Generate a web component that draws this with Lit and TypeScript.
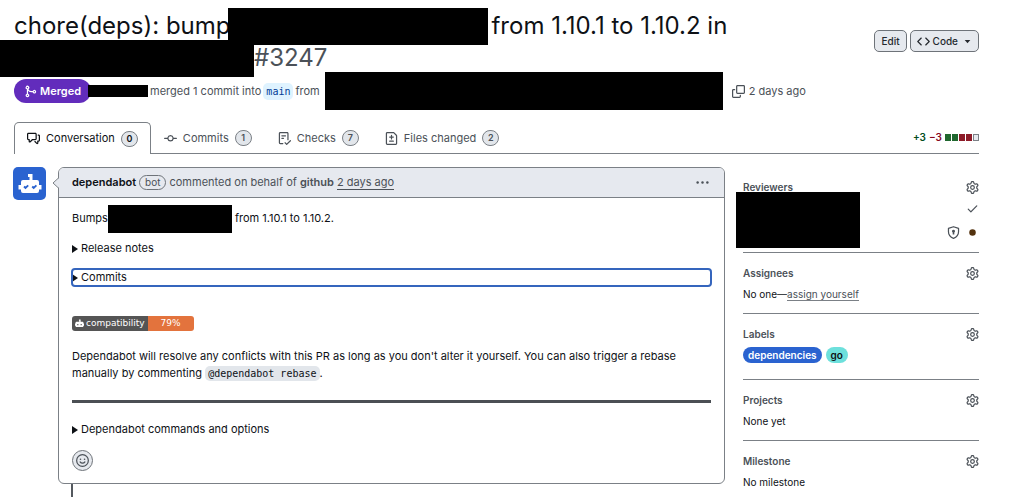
import { LitElement, html, css, svg, nothing, type TemplateResult } from "lit";
import { customElement, property } from "lit/decorators.js";

const ICONS: Record<string, TemplateResult> = {
  merge: svg`<path d="M5.45 5.154A4.25 4.25 0 0 0 9.25 7.5h1.378a2.251 2.251 0 1 1 0 1.5H9.25A5.734 5.734 0 0 1 5 7.123v3.505a2.25 2.25 0 1 1-1.5 0V5.372a2.25 2.25 0 1 1 1.95-.218ZM4.25 13.5a.75.75 0 1 0 0-1.5.75.75 0 0 0 0 1.5Zm8.5-4.5a.75.75 0 1 0 0-1.5.75.75 0 0 0 0 1.5ZM5 3.25a.75.75 0 1 0 0 .005V3.25Z"/>`,
  code: svg`<path d="m11.28 3.22 4.25 4.25a.75.75 0 0 1 0 1.06l-4.25 4.25a.749.749 0 0 1-1.275-.326.749.749 0 0 1 .215-.734L13.94 8l-3.72-3.72a.749.749 0 0 1 .326-1.275.749.749 0 0 1 .734.215Zm-6.56 0a.751.751 0 0 1 1.042.018.751.751 0 0 1 .018 1.042L2.06 8l3.72 3.72a.749.749 0 0 1-.326 1.275.749.749 0 0 1-.734-.215L.47 8.53a.75.75 0 0 1 0-1.06Z"/>`,
  caret: svg`<path d="M3 5.5h10L8 11Z"/>`,
  copy: svg`<path d="M0 6.75C0 5.784.784 5 1.75 5h1.5a.75.75 0 0 1 0 1.5h-1.5a.25.25 0 0 0-.25.25v7.5c0 .138.112.25.25.25h7.5a.25.25 0 0 0 .25-.25v-1.5a.75.75 0 0 1 1.5 0v1.5A1.75 1.75 0 0 1 9.25 16h-7.5A1.75 1.75 0 0 1 0 14.25Z"/><path d="M5 1.75C5 .784 5.784 0 6.75 0h7.5C15.216 0 16 .784 16 1.75v7.5A1.75 1.75 0 0 1 14.25 11h-7.5A1.75 1.75 0 0 1 5 9.25Zm1.75-.25a.25.25 0 0 0-.25.25v7.5c0 .138.112.25.25.25h7.5a.25.25 0 0 0 .25-.25v-7.5a.25.25 0 0 0-.25-.25Z"/>`,
  discussion: svg`<path d="M1.75 1h8.5c.966 0 1.75.784 1.75 1.75v5.5A1.75 1.75 0 0 1 10.25 10H7.061l-2.574 2.573A1.458 1.458 0 0 1 2 11.543V10h-.25A1.75 1.75 0 0 1 0 8.25v-5.5C0 1.784.784 1 1.75 1ZM1.5 2.75v5.5c0 .138.112.25.25.25h1a.75.75 0 0 1 .75.75v2.19l2.72-2.72a.749.749 0 0 1 .53-.22h3.5a.25.25 0 0 0 .25-.25v-5.5a.25.25 0 0 0-.25-.25h-8.5a.25.25 0 0 0-.25.25Zm13 2a.25.25 0 0 0-.25-.25h-.5a.75.75 0 0 1 0-1.5h.5c.966 0 1.75.784 1.75 1.75v5.5A1.75 1.75 0 0 1 14.25 12H14v1.543a1.458 1.458 0 0 1-2.487 1.03L9.22 12.28a.749.749 0 0 1 .326-1.275.749.749 0 0 1 .734.215l2.22 2.22v-2.19a.75.75 0 0 1 .75-.75h1a.25.25 0 0 0 .25-.25Z"/>`,
  commit: svg`<path d="M11.93 8.5a4.002 4.002 0 0 1-7.86 0H.75a.75.75 0 0 1 0-1.5h3.32a4.002 4.002 0 0 1 7.86 0h3.32a.75.75 0 0 1 0 1.5Zm-1.43-.75a2.5 2.5 0 1 0-5 0 2.5 2.5 0 0 0 5 0Z"/>`,
  checklist: svg`<path d="M2.5 1.75v11.5c0 .138.112.25.25.25h3.17a.75.75 0 0 1 0 1.5H2.75A1.75 1.75 0 0 1 1 13.25V1.75C1 .784 1.784 0 2.75 0h8.5C12.216 0 13 .784 13 1.75v7.736a.75.75 0 0 1-1.5 0V1.75a.25.25 0 0 0-.25-.25h-8.5a.25.25 0 0 0-.25.25Zm13.274 9.537v-.001l-4.557 4.45a.75.75 0 0 1-1.055-.008l-1.943-1.95a.75.75 0 0 1 1.062-1.058l1.419 1.425 4.026-3.932a.75.75 0 1 1 1.048 1.074ZM4.75 4h4.5a.75.75 0 0 1 0 1.5h-4.5a.75.75 0 0 1 0-1.5ZM4 7.75A.75.75 0 0 1 4.75 7h2a.75.75 0 0 1 0 1.5h-2A.75.75 0 0 1 4 7.75Z"/>`,
  diff: svg`<path d="M1 1.75C1 .784 1.784 0 2.75 0h7.586c.464 0 .909.184 1.237.513l2.914 2.914c.329.328.513.773.513 1.237v9.586A1.75 1.75 0 0 1 13.25 16H2.75A1.75 1.75 0 0 1 1 14.25Zm1.75-.25a.25.25 0 0 0-.25.25v12.5c0 .138.112.25.25.25h10.5a.25.25 0 0 0 .25-.25V4.664a.25.25 0 0 0-.073-.177l-2.914-2.914a.25.25 0 0 0-.177-.073ZM8 3.25a.75.75 0 0 1 .75.75v1.5h1.5a.75.75 0 0 1 0 1.5h-1.5v1.5a.75.75 0 0 1-1.5 0V7h-1.5a.75.75 0 0 1 0-1.5h1.5V4A.75.75 0 0 1 8 3.25Zm-3 8a.75.75 0 0 1 .75-.75h4.5a.75.75 0 0 1 0 1.5h-4.5a.75.75 0 0 1-.75-.75Z"/>`,
  gear: svg`<path d="M8 0a8.2 8.2 0 0 1 .701.031C9.444.095 9.99.645 10.16 1.29l.288 1.107c.018.066.079.158.212.224.231.114.454.243.668.386.123.082.233.09.299.071l1.103-.303c.644-.176 1.392.021 1.82.63.27.385.506.792.704 1.218.315.675.111 1.422-.364 1.891l-.814.806c-.049.048-.098.147-.088.294.016.257.016.515 0 .772-.01.147.038.246.088.294l.814.806c.475.469.679 1.216.364 1.891a7.977 7.977 0 0 1-.704 1.217c-.428.61-1.176.807-1.82.63l-1.102-.302c-.067-.019-.177-.011-.3.071a5.909 5.909 0 0 1-.668.386c-.133.066-.194.158-.211.224l-.29 1.106c-.168.646-.715 1.196-1.458 1.26a8.006 8.006 0 0 1-1.402 0c-.743-.064-1.289-.614-1.458-1.26l-.289-1.106c-.018-.066-.079-.158-.212-.224a5.738 5.738 0 0 1-.668-.386c-.123-.082-.233-.09-.299-.071l-1.103.303c-.644.176-1.392-.021-1.82-.63a8.12 8.12 0 0 1-.704-1.218c-.315-.675-.111-1.422.363-1.891l.815-.806c.05-.048.098-.147.088-.294a6.214 6.214 0 0 1 0-.772c.01-.147-.038-.246-.088-.294l-.815-.806C.635 6.045.431 5.298.746 4.623a7.92 7.92 0 0 1 .704-1.217c.428-.61 1.176-.807 1.82-.63l1.102.302c.067.019.177.011.3-.071.214-.143.437-.272.668-.386.133-.066.194-.158.211-.224l.29-1.106C6.009.645 6.556.095 7.299.03 7.53.01 7.764 0 8 0Zm-.571 1.525c-.036.003-.108.036-.137.146l-.289 1.105c-.147.561-.549.967-.998 1.189-.173.086-.34.183-.5.29-.417.278-.97.423-1.529.27l-1.103-.303c-.109-.03-.175.016-.195.045-.22.312-.412.644-.573.99-.014.031-.021.11.059.19l.815.806c.411.406.562.957.53 1.456a4.709 4.709 0 0 0 0 .582c.032.499-.119 1.05-.53 1.456l-.815.806c-.081.08-.073.159-.059.19.162.346.353.677.573.989.02.03.085.076.195.046l1.102-.303c.56-.153 1.113-.008 1.53.27.161.107.328.204.501.29.447.222.85.629.997 1.189l.289 1.105c.029.109.101.143.137.146a6.6 6.6 0 0 0 1.142 0c.036-.003.108-.036.137-.146l.289-1.105c.147-.561.549-.967.998-1.189.173-.086.34-.183.5-.29.417-.278.97-.423 1.529-.27l1.103.303c.109.029.175-.016.195-.045.22-.313.411-.644.573-.99.014-.031.021-.11-.059-.19l-.815-.806c-.411-.406-.562-.957-.53-1.456a4.709 4.709 0 0 0 0-.582c-.032-.499.119-1.05.53-1.456l.815-.806c.081-.08.073-.159.059-.19a6.464 6.464 0 0 0-.573-.989c-.02-.03-.085-.076-.195-.046l-1.102.303c-.56.153-1.113.008-1.53-.27a4.44 4.44 0 0 0-.501-.29c-.447-.222-.85-.629-.997-1.189l-.289-1.105c-.029-.11-.101-.143-.137-.146a6.6 6.6 0 0 0-1.142 0ZM11 8a3 3 0 1 1-6 0 3 3 0 0 1 6 0ZM9.5 8a1.5 1.5 0 1 0-3.001.001A1.5 1.5 0 0 0 9.5 8Z"/>`,
  check: svg`<path d="M13.78 4.22a.75.75 0 0 1 0 1.06l-7.25 7.25a.75.75 0 0 1-1.06 0L2.22 9.28a.751.751 0 0 1 .018-1.042.751.751 0 0 1 1.042-.018L6 10.94l6.72-6.72a.75.75 0 0 1 1.06 0Z"/>`,
  shield: svg`<path d="M8 .9 14.2 2.9V7.2c0 4-2.4 6.6-6.2 8-3.8-1.4-6.2-4-6.2-8V2.900Z" fill="none" stroke="currentColor" stroke-width="1.5" stroke-linejoin="round"/><path d="M8 4.500a1.900 1.900 0 0 1 1 3.500V10.500H7V8A1.900 1.900 0 0 1 8 4.500Z"/>`,
  dot: svg`<circle cx="8" cy="8" r="4"/>`,
  kebab: svg`<circle cx="2" cy="8" r="1.500"/><circle cx="8" cy="8" r="1.500"/><circle cx="14" cy="8" r="1.500"/>`,
  smiley: svg`<circle cx="8" cy="8" r="7.200" fill="none" stroke="currentColor" stroke-width="1.500"/><circle cx="5.500" cy="6.500" r="1"/><circle cx="10.500" cy="6.500" r="1"/><path d="M5 9.700c1.500 2.200 4.500 2.200 6 0" fill="none" stroke="currentColor" stroke-width="1.500" stroke-linecap="round"/>`,
  bot: svg`<path d="M7 1h3v4h3.500A1.500 1.500 0 0 1 15 6.500V8h1v4h-1v.5a1.500 1.500 0 0 1-1.500 1.500h-11A1.500 1.500 0 0 1 1 12.500V12H0V8h1V6.500A1.500 1.500 0 0 1 2.500 5h5V3H7Zm-3 8v2h2V9Zm6 0v2h2V9Z"/>`,
};

const icon = (name: string, size = "") =>
  html`<svg class="icon ${size}" viewBox="0 0 16 16" aria-hidden="true">${ICONS[name]}</svg>`;

const shared = css`
  * { box-sizing: border-box; }
  .icon { width: 13px; height: 13px; fill: currentColor; flex: none; display: block; }
  .icon.small { width: 9px; height: 9px; }
  a { color: inherit; text-decoration: none; }
  button { font: inherit; color: inherit; background: none; border: 0; padding: 0; cursor: pointer; }
  .redacted { background: #000; flex: none; display: block; }
`;

@customElement("side-section")
export class SideSection extends LitElement {
  @property() heading = "";

  static styles = [shared, css`
    :host { display: block; padding: 12px 0 10px; border-bottom: 1px solid #7b8086; }
    :host(:last-of-type) { border-bottom: 0; }
    .head { display: flex; justify-content: space-between; align-items: center; height: 17px; margin-bottom: 4px; color: #4b5158; }
    h3 { margin: 0; font-size: 10px; font-weight: 600; }
  `];

  render() {
    return html`
      <div class="head">
        <h3>${this.heading}</h3>
        <button aria-label="Edit ${this.heading}">${icon("gear")}</button>
      </div>
      <slot></slot>`;
  }
}

@customElement("app-root")
export class AppRoot extends LitElement {
  private tabs = [
    { icon: "discussion", label: "Conversation", count: 0, active: true },
    { icon: "commit", label: "Commits", count: 1 },
    { icon: "checklist", label: "Checks", count: 7 },
    { icon: "diff", label: "Files changed", count: 2 },
  ];

  private blocks = ["add", "add", "del", "del", "none"];

  static styles = [shared, css`
    :host {
      display: block; min-height: 100vh; padding: 10px 45px 0 14px; background: #fff; color: #0e1116;
      font-family: Inter, "Liberation Sans", sans-serif; font-size: 11px; line-height: 17px;
    }
    .muted { color: #4b5158; }
    .mono { font-family: "DejaVu Sans Mono", "Liberation Mono", monospace; font-size: 10px; }

    .top { display: flex; justify-content: space-between; align-items: center; }
    h1 { margin: 0; font-size: 24px; line-height: 32px; font-weight: 400; flex: 1; min-width: 0; }
    .line { display: flex; align-items: center; height: 32px; white-space: nowrap; }
    .line .redacted { height: 37px; }
    .package { width: 260px; margin: 0 3px 0 -2px; }
    .path { width: 254px; margin-left: -14px; }
    .number { color: #4b5158; }
    .actions { display: flex; gap: 3px; margin-top: -2px; }
    .btn {
      display: flex; align-items: center; gap: 3px; height: 22px; padding: 0 6px; font-size: 10px; font-weight: 500;
      color: #25292e; background: #e6e9ee; border: 1px solid #6e7379; border-radius: 5px;
    }
    .btn .small { margin-left: 2px; }

    .meta { display: flex; align-items: center; height: 24px; margin-top: 5px; white-space: nowrap; }
    .state {
      display: flex; align-items: center; gap: 3px; height: 24px; padding: 0 10px; border-radius: 12px;
      background: #622cbc; color: #fff; font-weight: 600;
    }
    .user { width: 60px; height: 12px; margin: 0 2px 0 -3px; }
    .branch { background: #dff3ff; color: #023b95; border-radius: 5px; padding: 0 3px; margin: 0 2px; }
    .head-ref { width: 398px; height: 38px; margin: 0 9px 0 5px; }
    .copy { margin-right: 4px; }

    .tabs { display: flex; margin-top: 19px; border-bottom: 1px solid #7b8086; height: 32px; align-items: stretch; }
    .tab {
      display: flex; align-items: center; gap: 6px; padding: 0 12px; color: #4b5158;
      border: 1px solid transparent; border-bottom: 0; border-radius: 5px 5px 0 0; white-space: nowrap;
    }
    .tab.active { color: #0e1116; background: #fff; border-color: #7b8086; margin-bottom: -1px; }
    .count {
      height: 16px; min-width: 17px; border: 1px solid #7b8086; border-radius: 8px; background: #e2e6eb;
      font-size: 9px; line-height: 14px; font-weight: 600; text-align: center;
    }
    .stat { display: flex; align-items: center; gap: 3px; margin-left: auto; font-size: 10px; font-weight: 600; }
    .plus { color: #024c1a; }
    .minus { color: #86061d; }
    .blocks { display: flex; gap: 1px; }
    .block { width: 6px; height: 7px; background: #20672f; }
    .block.del { background: #8d1b28; }
    .block.none { background: #e6e9ee; border: 1px solid #7b8086; }

    .main { display: grid; grid-template-columns: 33px minmax(0, 1fr) 236px; padding-top: 13px; margin-left: -1px; }
    .avatar {
      display: grid; place-items: center; width: 33px; height: 33px; border-radius: 5px; background: #2a63d0;
    }
    .avatar svg { width: 24px; height: 24px; }
    .thread { margin: 0 18px 0 12px; }
    .comment { position: relative; border: 1px solid #7b8086; border-radius: 6px; background: #fff; }
    .pointer { position: absolute; left: -7px; top: 9px; width: 8px; height: 12px; }
    .comment-head {
      display: flex; align-items: center; gap: 3px; height: 30px; padding: 0 13px; background: #e6e9ef;
      border-bottom: 1px solid #7b8086; border-radius: 5px 5px 0 0;
    }
    .comment-head strong { font-weight: 600; }
    .author { color: #0e1116; }
    .bot-tag { border: 1px solid #6e7379; border-radius: 8px; padding: 0 5px; font-size: 10px; line-height: 13px; }
    .time { border-bottom: 1px solid #4b5158; line-height: 13px; }
    .more { margin-left: auto; padding: 0 2px; }
    .body { padding: 12px 13px; }
    p { margin: 0; }
    .bumps { display: flex; align-items: center; height: 17px; margin-bottom: 13px; }
    .bumps .redacted { width: 124px; height: 28px; margin: 0 3px 0 0; }
    details { margin-bottom: 12px; }
    summary { display: flex; align-items: center; gap: 3px; list-style: none; height: 17px; cursor: pointer; border-radius: 3px; }
    summary::-webkit-details-marker { display: none; }
    summary::before { content: ""; border: solid transparent; border-width: 4px 0 4px 6px; border-left-color: currentColor; }
    .focused summary { outline: 2px solid #3565bd; outline-offset: -1px; }
    .compat { display: flex; width: max-content; margin: 30px 0 17px; height: 15px; line-height: 15px; font-family: "DejaVu Sans", sans-serif; font-size: 9px; color: #fff; border-radius: 3px; overflow: hidden; }
    .compat-name { display: flex; align-items: center; gap: 2px; background: #555; padding: 0 3px; }
    .compat-score { background: #e3733d; padding: 0 13px; }
    code { display: inline-block; background: #e2e6eb; border-radius: 5px; padding: 1px 3px; line-height: 13px; }
    hr { border: 0; height: 3px; background: #4b4f54; margin: 18px 0; }
    .react {
      display: grid; place-items: center; width: 21px; height: 21px; border: 1px solid #6e7379; border-radius: 11px;
      background: #e6e9ee; color: #4b5158;
    }
    .rail { width: 2px; height: 13px; margin-left: 13px; background: #54595f; }

    .side { font-size: 10px; }
    .reviewer { display: flex; align-items: flex-start; height: 24px; }
    .reviewer .redacted { width: 124px; height: 28px; margin-left: -7px; }
    .reviewer:first-of-type { align-items: flex-end; }
    .marks { display: flex; align-items: center; gap: 6px; height: 24px; margin-left: auto; color: #4b5158; }
    .pending { color: #53320e; display: flex; }
    .reviewers { margin: -4px 0 -2px; }
    .assign { color: #4b5158; border-bottom: 1px solid #7b8086; }
    .labels { display: flex; gap: 4px; padding: 0 0 6px; }
    .label { height: 16px; line-height: 16px; padding: 0 5px; border-radius: 8px; font-weight: 600; background: #2a63d0; color: #fff; }
    .label.go { background: #6de0dc; color: #0e1116; }
  `];

  private renderDetails(label: string, focused = false) {
    return html`<details class=${focused ? "focused" : nothing}><summary>${label}</summary></details>`;
  }

  render() {
    return html`
      <header class="top">
        <h1>
          <span class="line">chore(deps): bump<span class="redacted package"></span>from 1.10.1 to 1.10.2 in</span>
          <span class="line"><span class="redacted path"></span><span class="number">#3247</span></span>
        </h1>
        <div class="actions">
          <button class="btn">Edit</button>
          <button class="btn">${icon("code")}Code${icon("caret", "small")}</button>
        </div>
      </header>
      <div class="meta muted">
        <span class="state">${icon("merge")}Merged</span>
        <span class="redacted user"></span>
        merged 1 commit into <a class="branch mono" href="#">main</a> from
        <span class="redacted head-ref"></span>
        <button class="copy" aria-label="Copy branch name">${icon("copy")}</button>2 days ago
      </div>
      <nav class="tabs">
        ${this.tabs.map((t) => html`
          <a class="tab ${t.active ? "active" : ""}" href="#">${icon(t.icon)}<span>${t.label}</span><span class="count">${t.count}</span></a>`)}
        <div class="stat">
          <span class="plus">+3</span><span class="minus">−3</span>
          <span class="blocks">${this.blocks.map((b) => html`<span class="block ${b}"></span>`)}</span>
        </div>
      </nav>
      <main class="main">
        <a class="avatar" href="#" aria-label="dependabot">
          <svg viewBox="0 0 24 24" fill="#fff" aria-hidden="true">
            <path d="M10 2h4.500v6H19a2 2 0 0 1 2 2v3h2.500v4.500H21V19a2 2 0 0 1-2 2H5a2 2 0 0 1-2-2v-1.500H.500V13H3v-3a2 2 0 0 1 2-2h6.500V5H10Z"/>
            <path d="m6 14.500 1.500 1.500 2.700-2.700m4 1.200 1.500 1.500 2.700-2.700" fill="none" stroke="#2a63d0" stroke-width="1.800"/>
          </svg>
        </a>
        <div class="thread">
          <article class="comment">
            <svg class="pointer" viewBox="0 0 8 12" aria-hidden="true">
              <path d="M8 0 1 6l7 6" fill="#e6e9ef"/><path d="M7 .5 1 6l6 5.500" fill="none" stroke="#7b8086"/>
            </svg>
            <div class="comment-head muted">
              <strong class="author">dependabot</strong>
              <span class="bot-tag">bot</span>
              <span>commented on behalf of <strong>github</strong></span>
              <a class="time" href="#">2 days ago</a>
              <button class="more" aria-label="More options">${icon("kebab")}</button>
            </div>
            <div class="body">
              <p class="bumps">Bumps<span class="redacted"></span>from 1.10.1 to 1.10.2.</p>
              ${this.renderDetails("Release notes")}
              ${this.renderDetails("Commits", true)}
              <a class="compat" href="#">
                <span class="compat-name">${icon("bot", "small")}compatibility</span><span class="compat-score">79%</span>
              </a>
              <p>Dependabot will resolve any conflicts with this PR as long as you don't alter it yourself. You can also trigger a rebase manually by commenting <code class="mono">@dependabot rebase</code>.</p>
              <hr />
              ${this.renderDetails("Dependabot commands and options")}
              <button class="react" aria-label="Add reaction">${icon("smiley")}</button>
            </div>
          </article>
          <div class="rail"></div>
        </div>
        <aside class="side">
          <side-section heading="Reviewers">
            <div class="reviewers">
              <div class="reviewer"><span class="redacted"></span><span class="marks">${icon("check")}</span></div>
              <div class="reviewer"><span class="redacted"></span><span class="marks">${icon("shield")}<span class="pending">${icon("dot")}</span></span></div>
            </div>
          </side-section>
          <side-section heading="Assignees">No one—<a class="assign" href="#">assign yourself</a></side-section>
          <side-section heading="Labels">
            <div class="labels"><a class="label" href="#">dependencies</a><a class="label go" href="#">go</a></div>
          </side-section>
          <side-section heading="Projects">None yet</side-section>
          <side-section heading="Milestone">No milestone</side-section>
        </aside>
      </main>`;
  }
}
